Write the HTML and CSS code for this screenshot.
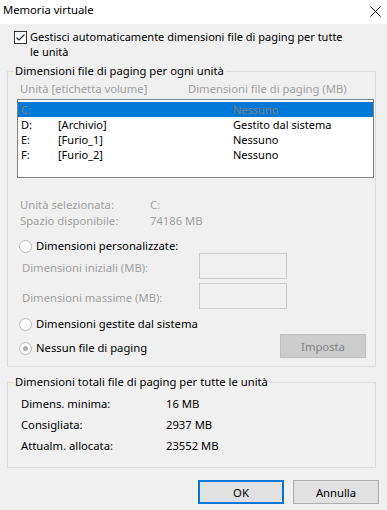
FILE: index.html
```html
<!DOCTYPE html>
<html lang="it">
  <head>
    <meta charset="UTF-8" />
    <meta name="viewport" content="width=device-width, initial-scale=1.0" />
    <title>Memoria virtuale</title>
    <link rel="stylesheet" href="styles.css">
  </head>
  <body>
    <div class="titlebar">
      <span class="title">Memoria virtuale</span>
      <svg class="close" width="11" height="11" viewBox="0 0 11 11">
        <path d="M0.5 0.5 L10.5 10.5 M10.5 0.5 L0.5 10.5" stroke="#000" stroke-width="1" fill="none" />
      </svg>
    </div>

    <div class="content">
      <label class="auto">
        <span class="check">
          <svg width="11" height="11" viewBox="0 0 11 11">
            <path d="M1.5 5.5 L4 8 L9.5 2.5" stroke="#222" stroke-width="1.1" fill="none" />
          </svg>
        </span>
        <span>Gestisci automaticamente dimensioni file di paging per tutte<br>le unità</span>
      </label>

      <fieldset class="group">
        <legend>Dimensioni file di paging per ogni unità</legend>
        <div class="cols disabled">
          <span>Unità [etichetta volume]</span>
          <span>Dimensioni file di paging (MB)</span>
        </div>
        <div class="listbox">
          <div class="row selected"><span>C:</span><span></span><span>Nessuno</span></div>
          <div class="row"><span>D:</span><span>[Archivio]</span><span>Gestito dal sistema</span></div>
          <div class="row"><span>E:</span><span>[Furio_1]</span><span>Nessuno</span></div>
          <div class="row"><span>F:</span><span>[Furio_2]</span><span>Nessuno</span></div>
        </div>

        <div class="info disabled">
          <span>Unità selezionata:</span><span>C:</span>
          <span>Spazio disponibile:</span><span>74186 MB</span>
        </div>

        <label class="radio first"><span class="circle"></span>Dimensioni personalizzate:</label>
        <div class="field">
          <span class="disabled">Dimensioni iniziali (MB):</span>
          <input type="text" disabled />
        </div>
        <div class="field second">
          <span class="disabled">Dimensioni massime (MB):</span>
          <input type="text" disabled />
        </div>
        <label class="radio system"><span class="circle"></span>Dimensioni gestite dal sistema</label>
        <div class="lastrow">
          <label class="radio"><span class="circle on"></span>Nessun file di paging</label>
          <button class="btn off" disabled>Imposta</button>
        </div>
      </fieldset>

      <fieldset class="group totals">
        <legend>Dimensioni totali file di paging per tutte le unità</legend>
        <div class="sums">
          <span>Dimens. minima:</span><span>16 MB</span>
          <span>Consigliata:</span><span>2937 MB</span>
          <span>Attualm. allocata:</span><span>23552 MB</span>
        </div>
      </fieldset>

      <div class="buttons">
        <button class="btn default">OK</button>
        <button class="btn">Annulla</button>
      </div>
    </div>
  </body>
</html>
```

FILE: styles.css
```css
* {
  margin: 0;
  padding: 0;
  box-sizing: border-box;
}
body {
  width: 387px;
  height: 510px;
  overflow: hidden;
  background-color: #f0f0f0;
  font-family: "Noto Sans", "Liberation Sans", sans-serif;
  font-size: 11.25px;
  color: #000;
}
.disabled {
  color: #a0a0a0;
}
.titlebar {
  height: 24px;
  background-color: #fff;
  display: flex;
  justify-content: space-between;
  padding: 2px 6px 0 3px;
}
.title {
  line-height: 15px;
}
.close {
  margin-top: 4px;
}
.content {
  padding: 0 8px 0 7px;
}
.auto {
  display: flex;
  gap: 3px;
  margin-top: 5px;
  padding-left: 7px;
  font-size: 11px;
  line-height: 15px;
}
.check {
  flex: none;
  width: 13px;
  height: 13px;
  margin-top: 2px;
  border: 1px solid #333;
  background-color: #fff;
}
.check svg {
  display: block;
}

.group {
  min-width: 0;
  margin: 5px 3px 0 0;
  padding: 0 0 8px 0;
  border: 1px solid #dcdcdc;
}
.group legend {
  margin-left: 6px;
  padding: 0 1px;
  line-height: 14px;
}
.cols {
  display: grid;
  grid-template-columns: 168px 1fr;
  margin-top: 3px;
  padding-left: 12px;
  line-height: 15px;
}
.listbox {
  width: 357px;
  height: 79px;
  margin: 3px 0 0 9px;
  padding-top: 2px;
  border: 1px solid #828282;
  background-color: #fff;
}
.row {
  display: grid;
  grid-template-columns: 37px 175px 1fr;
  height: 15px;
  font-size: 11px;
  line-height: 15px;
  padding-left: 3px;
}
.row.selected {
  background-color: #0078d7;
  color: #808080;
}
.info {
  display: grid;
  grid-template-columns: 130px 1fr;
  margin-top: 19px;
  padding-left: 12px;
  line-height: 16px;
}
.radio {
  display: flex;
  align-items: center;
  gap: 4px;
  padding-left: 11px;
  line-height: 14px;
}
.radio.first {
  margin-top: 10px;
}
.radio.system {
  margin-top: 8px;
}
.circle {
  flex: none;
  width: 13px;
  height: 13px;
  border: 1px solid #bcbcbc;
  border-radius: 50%;
  background-color: #fcfcfc;
  display: grid;
  place-items: center;
}
.circle.on::after {
  content: "";
  width: 5px;
  height: 5px;
  border-radius: 50%;
  background-color: #b0b0b0;
}
.field {
  display: flex;
  align-items: center;
  padding-left: 14px;
  height: 26px;
}
.field span {
  width: 177px;
  padding-top: 2px;
}
.field.second {
  margin-top: 4px;
}
.field input {
  width: 88px;
  height: 26px;
  border: 1px solid #cccccc;
  background-color: #f0f0f0;
}
.lastrow {
  display: flex;
  justify-content: space-between;
  align-items: flex-start;
}
.lastrow .radio {
  margin-top: 10px;
}
.btn {
  width: 86px;
  height: 24px;
  font-family: inherit;
  font-size: 11.25px;
  color: #000;
  background-color: #e1e1e1;
  border: 1px solid #adadad;
}
.btn.off {
  margin: 3px 9px 0 0;
  background-color: #cccccc;
  border-color: #bfbfbf;
  color: #838383;
}
.btn.default {
  border: 2px solid #0078d7;
}

.totals {
  margin-top: 8px;
  padding-bottom: 11px;
}
.sums {
  display: grid;
  grid-template-columns: 145px 1fr;
  margin-top: 4px;
  padding-left: 13px;
  line-height: 21px;
}
.buttons {
  display: flex;
  justify-content: flex-end;
  gap: 9px;
  margin-top: 12px;
}
```
